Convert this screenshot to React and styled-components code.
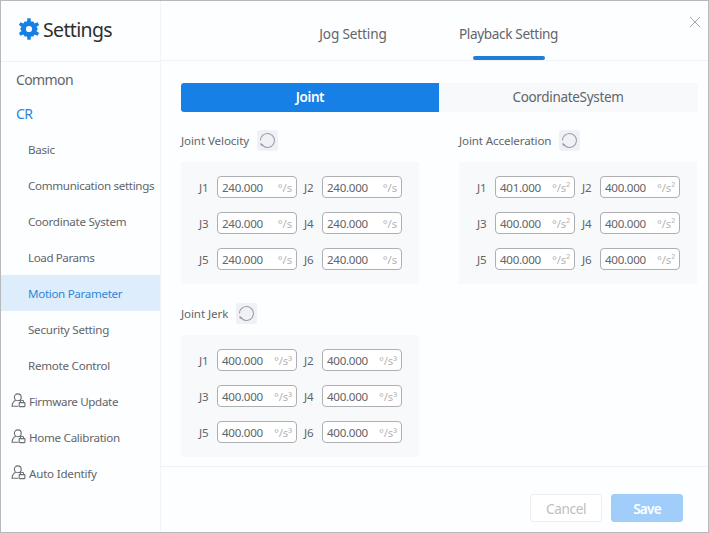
import React from "react";
import styled, { createGlobalStyle, css } from "styled-components";

const Global = createGlobalStyle`
  * { box-sizing: border-box; }
  html, body { margin: 0; padding: 0; }
  body { font-family: "Noto Sans", "Open Sans", sans-serif; color: #626569; }
`;

const Window = styled.div`
  width: 709px;
  height: 533px;
  display: flex;
  border: 1px solid #b6b8ba;
  background: #fdfeff;
  overflow: hidden;
`;

const Sidebar = styled.aside`
  width: 160px;
  flex: none;
  border-right: 1px solid #f0f3f8;
`;

const Brand = styled.header`
  height: 61px;
  display: flex;
  align-items: center;
  padding: 0 0 4px 17px;
  border-bottom: 1px solid #eff1f6;
`;

const BrandTitle = styled.h1`
  margin: 1px 0 0 3px;
  font-size: 19.5px;
  line-height: 26px;
  font-weight: 400;
  letter-spacing: -0.65px;
  color: #2d2f31;
`;

const Menu = styled.nav`
  display: flex;
  flex-direction: column;
`;

const Group = styled.div`
  height: ${(p) => p.$height}px;
  padding-left: 15px;
  font-size: 14px;
  line-height: 36px;
  letter-spacing: ${(p) => p.$track}px;
  color: ${(p) => (p.$active ? "#2f86d8" : "#626569")};
`;

const Item = styled.a`
  height: 36px;
  display: flex;
  align-items: center;
  padding: 1px 0 0 ${(p) => (p.$locked ? 10 : 27)}px;
  gap: 3px;
  font-size: 11.6px;
  letter-spacing: ${(p) => p.$track}px;
  white-space: nowrap;
  ${(p) =>
    p.$active &&
    css`
      background: #deedfc;
      color: #2f86d8;
    `}
  svg { margin-top: -3px; }
`;

const Main = styled.main`
  flex: 1;
  min-width: 0;
  display: flex;
  flex-direction: column;
  position: relative;
`;

const Tabs = styled.div`
  height: 60px;
  flex: none;
  display: flex;
  padding-left: 158px;
  gap: 72px;
  border-bottom: 1px solid #eff1f6;
`;

const Tab = styled.div`
  width: ${(p) => p.$width}px;
  display: flex;
  flex-direction: column;
  justify-content: space-between;
  align-items: center;
  padding-top: 22px;
  font-size: 13.6px;
  line-height: 22px;
  letter-spacing: ${(p) => p.$track}px;
  white-space: nowrap;
`;

const Underline = styled.span`
  width: 72px;
  height: 4px;
  margin-bottom: 0;
  border-radius: 2px;
  background: #1f7fd8;
`;

const Close = styled.button`
  position: absolute;
  top: 15px;
  right: 7px;
  width: 12px;
  height: 12px;
  padding: 0;
  border: 0;
  background: none;
  line-height: 0;
`;

const Content = styled.div`
  height: 406px;
  flex: none;
  padding: 22px 10px 0 20px;
  border-bottom: 1px solid #eff1f6;
`;

const Segments = styled.div`
  height: 29px;
  display: flex;
  border-radius: 3px;
  overflow: hidden;
  background: #f8f9fb;
`;

const Segment = styled.div`
  width: 258px;
  text-align: center;
  font-size: 13.5px;
  line-height: 28px;
  ${(p) =>
    p.$active &&
    css`
      background: #1680e6;
      color: #fff;
      font-weight: 600;
    `}
  letter-spacing: ${(p) => p.$track}px;
`;

const Grid = styled.div`
  display: grid;
  grid-template-columns: 238px 238px;
  column-gap: 40px;
  row-gap: 18px;
  padding-top: 17px;
`;

const SectionHead = styled.div`
  display: flex;
  align-items: center;
  height: 22px;
  gap: 8px;
  font-size: 11.6px;
  letter-spacing: ${(p) => p.$track}px;
`;

const Reset = styled.button`
  width: 21px;
  height: 21px;
  padding: 0;
  border: 0;
  border-radius: 3px;
  background: #eff1f6;
  display: grid;
  place-items: center;
`;

const Panel = styled.div`
  height: 122px;
  margin-top: 11px;
  padding: 14px 18px 0;
  display: grid;
  grid-template-columns: 105px 98px;
  grid-auto-rows: 36px;
  background: #f8f9fb;
`;

const Field = styled.label`
  display: flex;
  height: 22px;
  align-items: center;
  font-size: 11.6px;
`;

const FieldName = styled.span`
  width: 18px;
  letter-spacing: -0.1px;
`;

const Box = styled.span`
  width: 80px;
  height: 22px;
  display: flex;
  justify-content: space-between;
  align-items: center;
  padding: 0 4px;
  border: 1px solid #adafb2;
  border-radius: 4px;
  background: #fff;
  letter-spacing: -0.3px;
`;

const Unit = styled.span`
  color: #b3b4b7;
  font-size: 11.3px;
  letter-spacing: -0.1px;
`;

const Footer = styled.footer`
  flex: 1;
  display: flex;
  justify-content: flex-end;
  align-items: flex-start;
  gap: 9px;
  padding: 27px 25px 0 0;
`;

const Button = styled.button`
  width: 72px;
  height: 28px;
  padding: 0;
  border: 1px solid ${(p) => (p.$primary ? "#a1cdfb" : "#eceef2")};
  border-radius: 3px;
  background: ${(p) => (p.$primary ? "#a1cdfb" : "#fff")};
  color: ${(p) => (p.$primary ? "#fff" : "#bdbec1")};
  font: ${(p) => (p.$primary ? 600 : 400)} 13.6px/25px "Noto Sans", sans-serif;
  letter-spacing: ${(p) => (p.$primary ? -0.8 : -0.35)}px;
`;

const Gear = () => (
  <svg width="22" height="22" viewBox="0 0 22 22">
    <g fill="#1680e6">
      {[0, 60, 120, 180, 240, 300].map((a) => (
        <path key={a} transform={`rotate(${a} 11 11)`} d="M9.4.2h3.2l.4 4H9z" />
      ))}
      <path
        fillRule="evenodd"
        d="M6.6 3.4h8.8l4.4 7.6-4.4 7.6H6.6L2.2 11zM11 7.9a3.1 3.1 0 1 0 0 6.2 3.1 3.1 0 0 0 0-6.2z"
      />
    </g>
  </svg>
);

const UserLock = () => (
  <svg width="15" height="15" viewBox="0 0 15 15" fill="none" stroke="#6b6d70" strokeWidth="1.1">
    <circle cx="6.8" cy="4.3" r="3.4" />
    <path d="M4.8 7.2C2.4 8.2 1.2 10 1.1 13.3h6.2M8.8 7.1l1 .6" />
    <rect x="8.2" y="9.6" width="5.7" height="4" rx=".5" />
    <path d="M9.3 9.5V9a1.7 1.7 0 0 1 3.4 0v.5" />
  </svg>
);

const ResetIcon = () => (
  <svg width="17" height="17" viewBox="0 0 17 17" fill="none" stroke="#9a9da4">
    <path d="M3.3 13.2A7 7 0 1 0 1.5 8.5" strokeWidth="1.1" />
    <path d="M1.4 10.8l.4 3 2.7-.9z" fill="#8d9097" stroke="none" />
  </svg>
);

const ITEMS = [
  ["Basic", -0.3], ["Communication settings", -0.31], ["Coordinate System", -0.27],
  ["Load Params", -0.4], ["Motion Parameter", -0.32], ["Security Setting", -0.25],
  ["Remote Control", -0.25],
];
const LOCKED = [["Firmware Update", -0.35], ["Home Calibration", -0.28], ["Auto Identify", -0.22]];

const SECTIONS = [
  { title: "Joint Velocity", track: -0.1, unit: "°/s", values: Array(6).fill("240.000") },
  { title: "Joint Acceleration", track: -0.12, unit: "°/s²", values: ["401.000", ...Array(5).fill("400.000")] },
  { title: "Joint Jerk", track: -0.1, unit: "°/s³", values: Array(6).fill("400.000") },
];

const Section = ({ title, track, unit, values }) => (
  <section>
    <SectionHead $track={track}>
      <span>{title}</span>
      <Reset aria-label={`Reset ${title}`}><ResetIcon /></Reset>
    </SectionHead>
    <Panel>
      {values.map((v, i) => (
        <Field key={i}>
          <FieldName>J{i + 1}</FieldName>
          <Box><span>{v}</span><Unit>{unit}</Unit></Box>
        </Field>
      ))}
    </Panel>
  </section>
);

export default function App() {
  return (
    <>
      <Global />
      <Window>
        <Sidebar>
          <Brand><Gear /><BrandTitle>Settings</BrandTitle></Brand>
          <Menu>
            <Group $height={34} $track={-0.6}>Common</Group>
            <Group $height={35} $track={-0.5} $active>CR</Group>
            {ITEMS.map(([name, track]) => (
              <Item key={name} $track={track} $active={name === "Motion Parameter"}>{name}</Item>
            ))}
            {LOCKED.map(([name, track]) => (
              <Item key={name} $track={track} $locked><UserLock />{name}</Item>
            ))}
          </Menu>
        </Sidebar>
        <Main>
          <Tabs>
            <Tab $width={68} $track={-0.15}>Jog Setting</Tab>
            <Tab $width={99} $track={-0.35}>Playback Setting<Underline /></Tab>
          </Tabs>
          <Close aria-label="Close">
            <svg width="12" height="12" viewBox="0 0 12 12" stroke="#a5a7aa" strokeWidth="1">
              <path d="M1 1l10 10M11 1L1 11" />
            </svg>
          </Close>
          <Content>
            <Segments>
              <Segment $active $track={-0.4}>Joint</Segment>
              <Segment $track={-0.32}>CoordinateSystem</Segment>
            </Segments>
            <Grid>{SECTIONS.map((s) => <Section key={s.title} {...s} />)}</Grid>
          </Content>
          <Footer>
            <Button>Cancel</Button>
            <Button $primary>Save</Button>
          </Footer>
        </Main>
      </Window>
    </>
  );
}
